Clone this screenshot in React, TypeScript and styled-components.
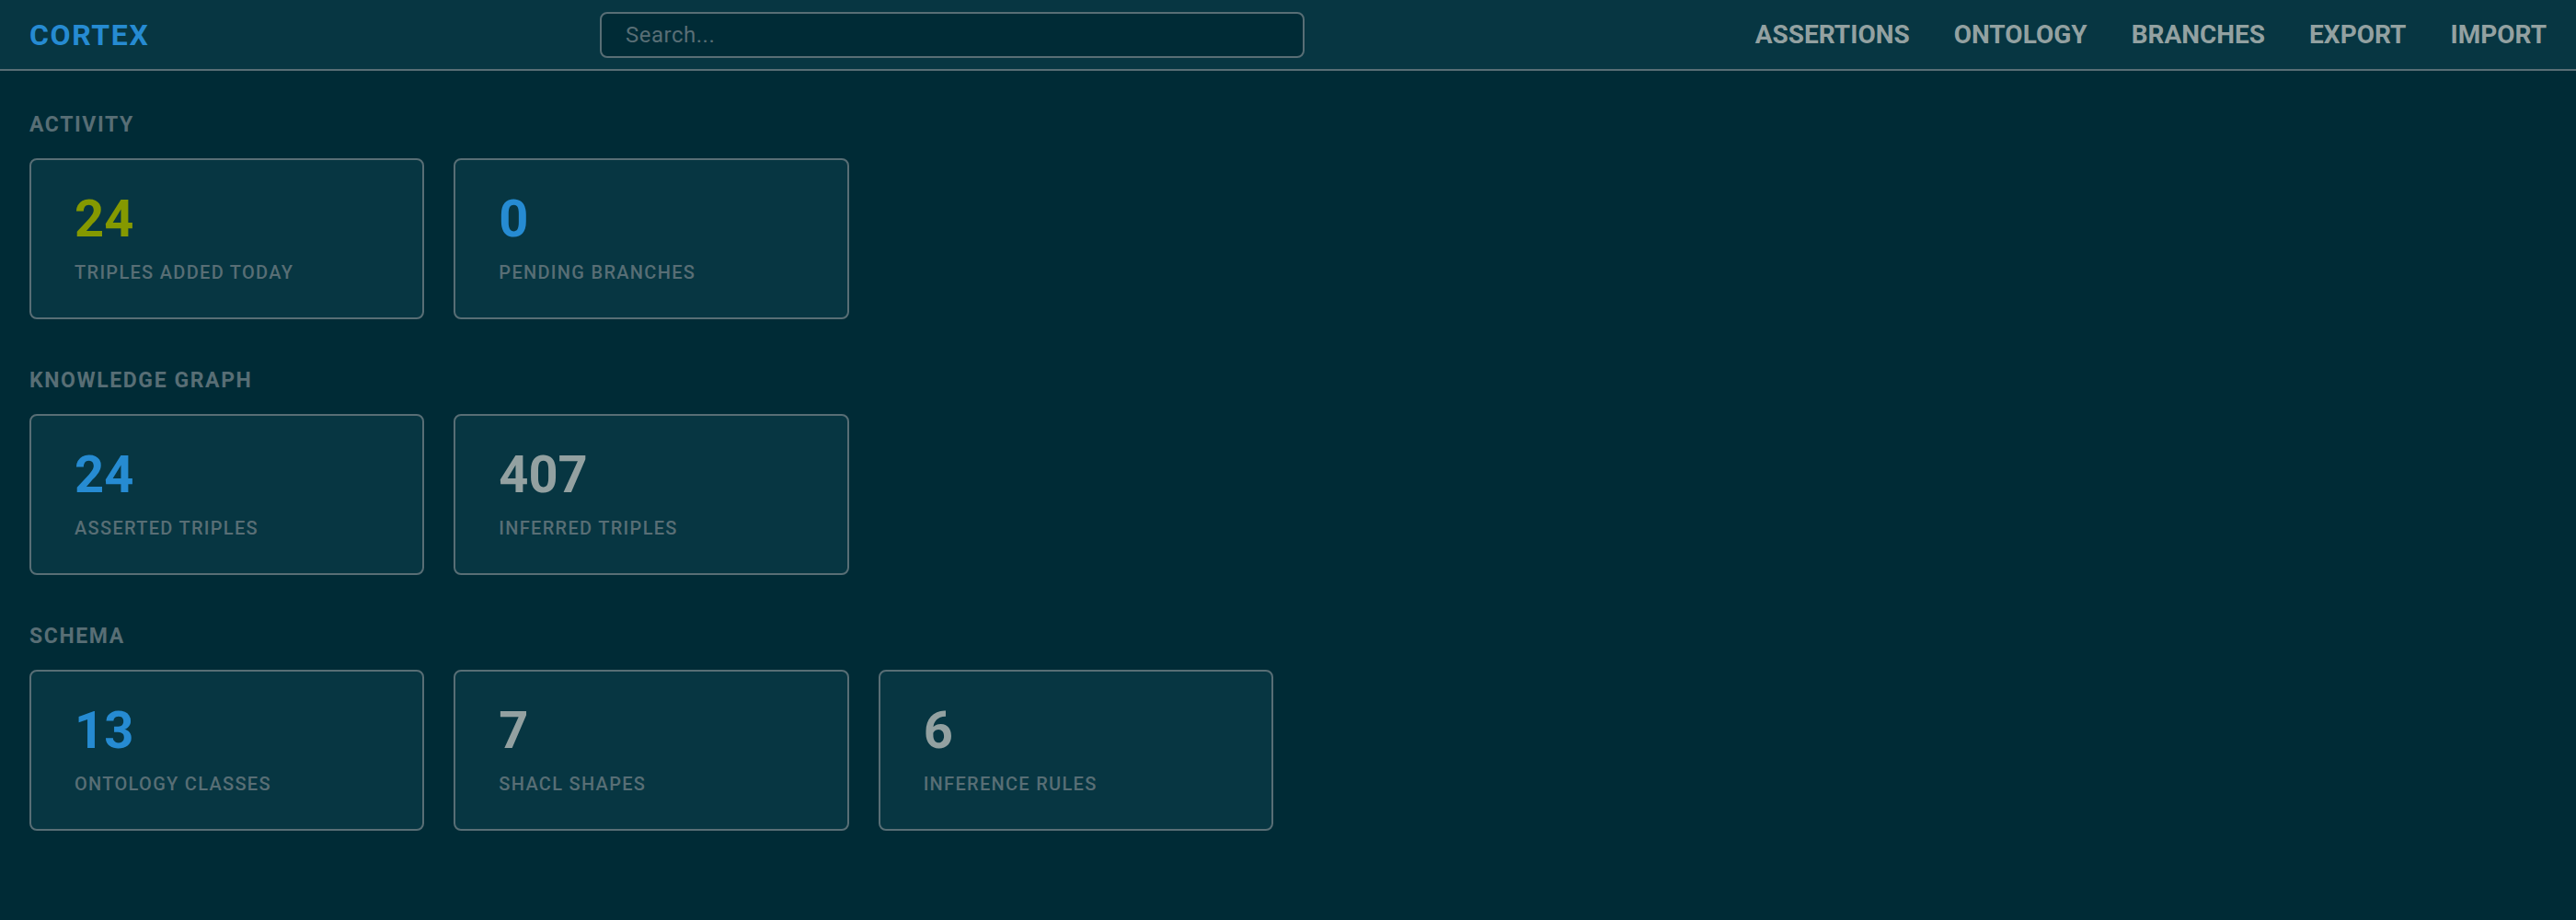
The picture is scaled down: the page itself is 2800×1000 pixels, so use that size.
import styled, { createGlobalStyle } from 'styled-components';

const GlobalStyle = createGlobalStyle`
  html, body {
    margin: 0;
    padding: 0;
    background-color: #002b36;
    font-family: Roboto, "Liberation Sans", sans-serif;
  }
  * {
    box-sizing: border-box;
  }
`;

const Page = styled.div`
  min-height: 1000px;
  background-color: #002b36;
`;

const Header = styled.header`
  display: flex;
  align-items: center;
  justify-content: space-between;
  height: 77px;
  padding: 0 32px;
  background-color: #073642;
  border-bottom: 2px solid #586e75;
`;

const Logo = styled.div`
  font-size: 32px;
  font-weight: 700;
  letter-spacing: 1.6px;
  color: #268bd2;
`;

const SearchInput = styled.input`
  width: 766px;
  height: 50px;
  padding: 0 26px;
  font-family: Roboto, "Liberation Sans", sans-serif;
  font-size: 24px;
  letter-spacing: 0.5px;
  color: #93a1a1;
  background-color: #002b36;
  border: 2px solid #586e75;
  border-radius: 8px;
  outline: none;
  &::placeholder {
    color: #586e75;
  }
`;

const Nav = styled.nav`
  display: flex;
  gap: 48px;
`;

const NavLink = styled.a`
  font-size: 28px;
  font-weight: 700;
  color: #93a1a1;
  text-decoration: none;
  cursor: pointer;
`;

const Main = styled.main`
  padding: 45px 32px 0;
`;

const Section = styled.section`
  margin-bottom: 53px;
`;

const SectionTitle = styled.h2`
  margin: 0 0 23px;
  font-size: 23px;
  font-weight: 700;
  letter-spacing: 1.6px;
  color: #586e75;
`;

const CardGrid = styled.div`
  display: grid;
  grid-template-columns: repeat(auto-fill, minmax(400px, 1fr));
  gap: 32px;
`;

const Card = styled.div`
  height: 175px;
  padding: 31px 47px 0;
  background-color: #073642;
  border: 2px solid #586e75;
  border-radius: 8px;
`;

const Value = styled.div<{ $color: string }>`
  font-size: 56px;
  font-weight: 700;
  color: ${({ $color }) => $color};
`;

const Label = styled.div`
  margin-top: 13px;
  font-size: 20px;
  font-weight: 500;
  letter-spacing: 1.3px;
  color: #586e75;
`;

const green = '#859900';
const blue = '#268bd2';
const grey = '#93a1a1';

const sections = [
  {
    title: 'ACTIVITY',
    stats: [
      { value: '24', label: 'TRIPLES ADDED TODAY', color: green },
      { value: '0', label: 'PENDING BRANCHES', color: blue },
    ],
  },
  {
    title: 'KNOWLEDGE GRAPH',
    stats: [
      { value: '24', label: 'ASSERTED TRIPLES', color: blue },
      { value: '407', label: 'INFERRED TRIPLES', color: grey },
    ],
  },
  {
    title: 'SCHEMA',
    stats: [
      { value: '13', label: 'ONTOLOGY CLASSES', color: blue },
      { value: '7', label: 'SHACL SHAPES', color: grey },
      { value: '6', label: 'INFERENCE RULES', color: grey },
    ],
  },
];

export default function App() {
  return (
    <Page>
      <GlobalStyle />
      <Header>
        <Logo>CORTEX</Logo>
        <SearchInput placeholder="Search..." />
        <Nav>
          {['ASSERTIONS', 'ONTOLOGY', 'BRANCHES', 'EXPORT', 'IMPORT'].map(item => (
            <NavLink key={item}>{item}</NavLink>
          ))}
        </Nav>
      </Header>
      <Main>
        {sections.map(section => (
          <Section key={section.title}>
            <SectionTitle>{section.title}</SectionTitle>
            <CardGrid>
              {section.stats.map(stat => (
                <Card key={stat.label}>
                  <Value $color={stat.color}>{stat.value}</Value>
                  <Label>{stat.label}</Label>
                </Card>
              ))}
            </CardGrid>
          </Section>
        ))}
      </Main>
    </Page>
  );
}
